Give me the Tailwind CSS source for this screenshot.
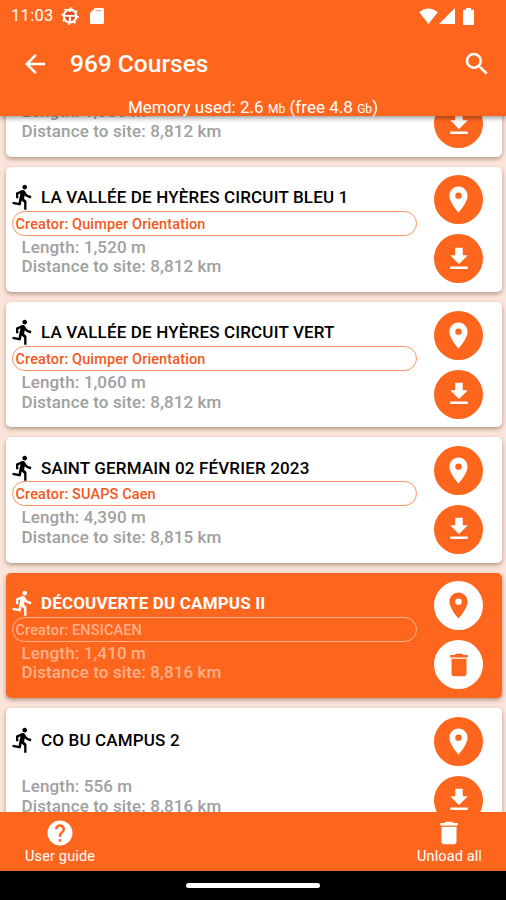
<!DOCTYPE html>
<html lang="en">
<head>
<meta charset="utf-8">
<title>Courses</title>
<script src="https://cdn.jsdelivr.net/npm/@tailwindcss/browser@4"></script>
</head>
<body class="w-[506px] h-[900px] overflow-hidden flex flex-col bg-black font-[Roboto,sans-serif]">
<svg class="hidden">
  <symbol id="run" viewBox="0 0 24 24"><path d="M13.49 5.48c1.1 0 2-.9 2-2s-.9-2-2-2-2 .9-2 2 .9 2 2 2zm-3.6 13.9 1-4.4 2.1 2v6h2v-7.500l-2.100-2 .6-3c1.300 1.500 3.300 2.500 5.500 2.500v-2c-1.900 0-3.500-1-4.300-2.400l-1-1.600c-.4-.6-1-1-1.700-1-.3 0-.5.1-.8.1l-5.200 2.200v4.700h2v-3.400l1.800-.7-1.600 8.100-4.900-1-.4 2 7 1.400z"/></symbol>
  <symbol id="pin" viewBox="0 0 24 24"><path d="M12 2C8.130 2 5 5.130 5 9c0 5.250 7 13 7 13s7-7.750 7-13c0-3.870-3.130-7-7-7zm0 9.500a2.500 2.500 0 1 1 0-5 2.500 2.500 0 0 1 0 5z"/></symbol>
  <symbol id="download" viewBox="0 0 24 24"><path d="M19 9h-4V3H9v6H5l7 7 7-7zM5 18v2h14v-2H5z"/></symbol>
  <symbol id="trash" viewBox="0 0 24 24"><path d="M6 19c0 1.100.9 2 2 2h8c1.100 0 2-.9 2-2V7H6v12zM19 4h-3.500l-1-1h-5l-1 1H5v2h14V4z"/></symbol>
</svg>

<header class="relative z-10 h-[116px] shrink-0 bg-[#fe661e] text-white shadow-[0_2px_5px_rgba(0,0,0,0.4)] flex flex-col">
  <div class="h-8 flex items-center pl-[11px] pr-[32px]">
    <span class="text-[16.500px] w-[43px] whitespace-nowrap tracking-[0.300px]">11:03</span>
    <svg class="ml-[7px] size-[18px]" viewBox="0 0 18 18"><circle cx="9" cy="9" r="8" fill="none" stroke="white" stroke-width="1.600" stroke-dasharray="2.200 4.080"/><circle cx="9" cy="9" r="6.300" fill="#e4481b" stroke="white" stroke-width="2.200"/><path d="M3 8.800h12" stroke="white" stroke-width="1.800"/><path d="M9 9v6M9 3v2" stroke="white" stroke-width="2.200"/></svg>
    <svg class="ml-[11px] w-[14px] h-4" viewBox="0 0 14 16" fill="white"><path d="M5 0h7.500a1.500 1.500 0 0 1 1.500 1.500v13a1.500 1.500 0 0 1-1.500 1.500h-11a1.500 1.500 0 0 1-1.500-1.500V5z"/><path d="M5.500 2.700h6" stroke="#fe8a55" stroke-width="1"/></svg>
    <span class="flex-1"></span>
    <svg class="w-[19px] h-[16px]" viewBox="0 0 19 16" fill="white"><path d="M9.500 16 .3 4.300C5.500-.9 13.500-.9 18.700 4.300z"/></svg>
    <svg class="ml-px w-[16px] h-[16px]" viewBox="0 0 16 16" fill="white"><path d="M16 0v16H0z"/></svg>
    <svg class="ml-[8px] w-[11px] h-[17px]" viewBox="0 0 11 17" fill="white"><path d="M3 0h5v1.700h2a1 1 0 0 1 1 1V16a1 1 0 0 1-1 1H1a1 1 0 0 1-1-1V2.700a1 1 0 0 1 1-1h2z"/></svg>
  </div>
  <div class="h-[64px] flex items-center pl-[20px] pr-[14px]">
    <svg class="size-[30px]" viewBox="0 0 24 24" fill="white"><path d="M20 11H7.830l5.590-5.590L12 4l-8 8 8 8 1.410-1.410L7.830 13H20z"/></svg>
    <h1 class="ml-[20px] text-[24.500px] font-medium leading-[34px] whitespace-nowrap">969 Courses</h1>
    <svg class="ml-auto size-[30px]" viewBox="0 0 24 24" fill="white"><path d="M15.500 14h-.79l-.28-.27A6.470 6.470 0 0 0 16 9.500 6.500 6.500 0 1 0 9.500 16c1.610 0 3.090-.59 4.230-1.570l.27.28v.79l5 4.990L20.490 19zm-6 0a4.500 4.500 0 1 1 0-9 4.500 4.500 0 0 1 0 9z"/></svg>
  </div>
  <p class="h-5 leading-[22px] text-center text-[17px] tracking-[0.030px] whitespace-nowrap">Memory used: 2.6 <span class="text-[12px]">Mb</span> (free 4.8 <span class="text-[12px]">Gb</span>)</p>
</header>

<main id="list" class="flex-1 min-h-0 overflow-hidden bg-[#fbe4da] pl-[5.500px] pr-[4.500px]"></main>

<footer class="relative z-10 h-[59px] shrink-0 bg-[#fe661e] text-white text-[14.500px] leading-[17px] flex justify-between pl-[25px] pr-[24px]">
  <div class="flex flex-col items-center">
    <svg class="mt-[6px] size-[30px]" viewBox="0 0 24 24" fill="white"><path d="M12 2C6.480 2 2 6.480 2 12s4.480 10 10 10 10-4.480 10-10S17.520 2 12 2zm1 17h-2v-2h2v2zm2.070-7.750-.9.920C13.450 12.900 13 13.500 13 15h-2v-.5c0-1.100.45-2.100 1.170-2.830l1.240-1.260c.37-.36.59-.86.59-1.410 0-1.100-.9-2-2-2s-2 .9-2 2H8c0-2.210 1.790-4 4-4s4 1.790 4 4c0 .88-.36 1.680-.93 2.250z"/></svg>
    <span class="whitespace-nowrap tracking-[0.150px]">User guide</span>
  </div>
  <div class="flex flex-col items-center">
    <svg class="mt-[6px] size-[30px]" viewBox="0 0 24 24" fill="white"><use href="#trash"/></svg>
    <span class="whitespace-nowrap tracking-[0.120px]">Unload all</span>
  </div>
</footer>
<div class="h-[29px] shrink-0 bg-black flex justify-center items-center"><div class="w-[134px] h-[5px] rounded-full bg-white"></div></div>

<script>
const courses = [
  { name: 'LE BOIS CIRCUIT', creator: 'Quimper Orientation', len: '1,060 m', dist: '8,812 km' },
  { name: 'LA VALLÉE DE HYÈRES CIRCUIT BLEU 1', creator: 'Quimper Orientation', len: '1,520 m', dist: '8,812 km' },
  { name: 'LA VALLÉE DE HYÈRES CIRCUIT VERT', creator: 'Quimper Orientation', len: '1,060 m', dist: '8,812 km' },
  { name: 'SAINT GERMAIN 02 FÉVRIER 2023', creator: 'SUAPS Caen', len: '4,390 m', dist: '8,815 km' },
  { name: 'DÉCOUVERTE DU CAMPUS II', creator: 'ENSICAEN', len: '1,410 m', dist: '8,816 km', loaded: true },
  { name: 'CO BU CAMPUS 2', creator: '', len: '556 m', dist: '8,816 km' },
];
const light = { card: 'bg-white', title: 'text-black font-medium', pill: 'border-[#fe661e]/70 text-[#f4581c]', info: 'text-[#a0a0a0]', btn: 'bg-[#fe661e] text-white' };
const dark = { card: 'bg-[#fe661e]', title: 'text-white font-bold', pill: 'border-[#ffb48f] text-[#ffb18b]', info: 'text-[#ffb18b]', btn: 'bg-white text-[#fe661e]' };
document.getElementById('list').innerHTML = '<div class="-mt-[84.700px] flex flex-col gap-[9.800px]">' + courses.map(c => {
  const s = c.loaded ? dark : light;
  return `<article class="h-[125.500px] shrink-0 rounded-[5px] shadow-[0_2px_4px_rgba(90,50,30,0.45)] flex items-center pl-[6px] pr-[18.500px] ${s.card}">
    <div class="w-[405.500px]">
      <div class="h-[27px] flex items-center ${s.title}">
        <svg class="size-[28px] -ml-[3px]" fill="currentColor"><use href="#run"/></svg>
        <span class="ml-[4.500px] mt-[1px] text-[17px] tracking-[0.160px] whitespace-nowrap">${c.name}</span>
      </div>
      ${c.creator ? `<div class="h-[25px] rounded-full border-[1.500px] pl-[3px] text-[14.500px] leading-[25px] tracking-[0.120px] font-medium whitespace-nowrap ${s.pill}">Creator: ${c.creator}</div>` : '<div class="h-[21px]"></div>'}
      <div class="pl-[10px] pt-[2px] -mb-[2px] text-[17px] leading-[19.700px] tracking-[0.120px] font-medium whitespace-nowrap ${s.info}"><p>Length: ${c.len}</p><p>Distance to site: ${c.dist}</p></div>
    </div>
    <div class="ml-auto flex flex-col gap-[10px]">
      <button class="size-[49px] rounded-full flex items-center justify-center ${s.btn}"><svg class="size-[31px]" fill="currentColor"><use href="#pin"/></svg></button>
      <button class="size-[49px] rounded-full flex items-center justify-center ${s.btn}"><svg class="size-[30px]" fill="currentColor"><use href="${c.loaded ? '#trash' : '#download'}"/></svg></button>
    </div>
  </article>`;
}).join('') + '</div>';
</script>
</body>
</html>
